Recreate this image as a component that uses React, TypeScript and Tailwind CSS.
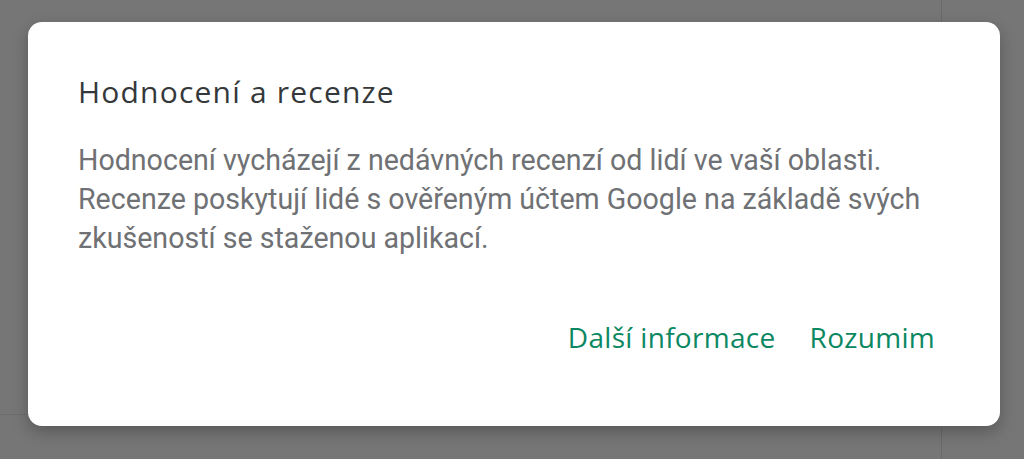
export default function App() {
  return (
    <div className="relative h-[459px] w-[1024px] overflow-hidden bg-[#767676]">
      {/* dimmed page behind the dialog */}
      <div className="flex h-full">
        <div className="h-full w-[942px] border-r border-[#6a6a6a]">
          <div className="h-[415px] border-b border-[#6c6c6c]" />
        </div>
        <div className="flex-1" />
      </div>

      <div
        className="absolute left-[28px] top-[22px] flex h-[404px] w-[972px] flex-col rounded-[14px] bg-white pl-[50px] pr-[49px] pt-[52px] shadow-[0_6px_16px_rgba(0,0,0,0.25)]"
        style={{ fontFamily: "Roboto, 'Noto Sans', sans-serif" }}
      >
        <h2
          className="text-[30px] leading-[36px] tracking-[1.2px] text-[#35383b]"
          style={{ fontFamily: "'Open Sans', Roboto, sans-serif" }}
        >
          Hodnocení a recenze
        </h2>
        <p className="mt-[31px] max-w-[880px] text-[28.6px] leading-[39px] text-[#6f7174]">
          Hodnocení vycházejí z nedávných recenzí od lidí ve vaší oblasti. Recenze poskytují lidé s ověřeným účtem
          Google na základě svých zkušeností se staženou aplikací.
        </p>
        <div className="mt-[53px] flex justify-end gap-0.5">
          <button
            className="h-[52px] rounded px-4 text-[28px] font-medium tracking-[0.3px] text-[#0b8862]"
            style={{ fontFamily: "'Open Sans', Roboto, sans-serif" }}
          >
            Další informace
          </button>
          <button
            className="h-[52px] rounded px-4 text-[28px] font-medium tracking-[0.3px] text-[#0b8862]"
            style={{ fontFamily: "'Open Sans', Roboto, sans-serif" }}
          >
            Rozumim
          </button>
        </div>
      </div>
    </div>
  )
}
